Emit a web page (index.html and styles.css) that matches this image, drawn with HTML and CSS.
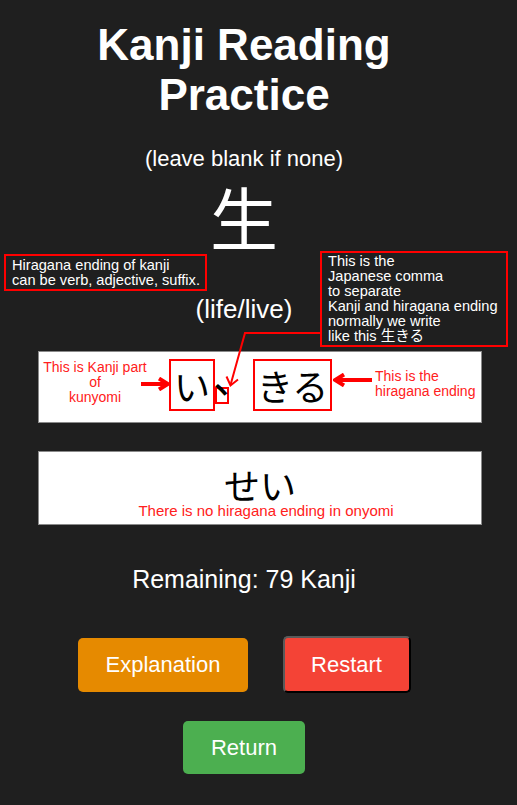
FILE: index.html
```html
<!DOCTYPE html>
<html lang="en">
<head>
<meta charset="utf-8">
<title>Kanji Reading Practice</title>
<link rel="stylesheet" href="styles.css">
</head>
<body>
<div class="app">
  <h1 class="title">Kanji Reading Practice</h1>
  <p class="hint">(leave blank if none)</p>
  <div class="kanji">生</div>
  <p class="meaning">(life/live)</p>

  <div class="answer kun">
    <span class="mark">い</span><span class="comma"><span class="comma-glyph">、</span></span><span class="mark wide">きる</span>
    <span class="label label-left">This is Kanji part<br>of<br>kunyomi</span>
    <svg class="arrow arrow-left" width="30" height="14" viewBox="0 0 30 14"><path d="M1 7H27M19 1.5L28 7L19 12.5" fill="none" stroke="#ff0000" stroke-width="4"/></svg>
    <svg class="arrow arrow-right" width="40" height="14" viewBox="0 0 40 14"><path d="M39 7H3M11 1.5L2 7L11 12.5" fill="none" stroke="#ff0000" stroke-width="4"/></svg>
    <span class="label label-right">This is the<br>hiragana ending</span>
  </div>

  <div class="answer on">
    <div class="on-kana">せい</div>
    <div class="on-note">There is no hiragana ending in onyomi</div>
  </div>

  <p class="remaining">Remaining: 79 Kanji</p>

  <div class="actions">
    <button class="btn btn-explain">Explanation</button>
    <button class="btn btn-restart">Restart</button>
  </div>
  <div class="actions">
    <button class="btn btn-return">Return</button>
  </div>

  <div class="note note-ending">Hiragana ending of kanji<br>can be verb, adjective, suffix.</div>
  <div class="note note-comma">This is the<br>Japanese comma<br>to separate<br>Kanji and hiragana ending<br>normally we write<br>like this 生きる</div>
  <svg class="connector" width="110" height="70" viewBox="220 325 110 70"><path d="M321 333H245L230.5 385" fill="none" stroke="#ff0000" stroke-width="2"/><path d="M226.5 376.5L230.5 385.5L238 379.5" fill="none" stroke="#ff0000" stroke-width="2"/></svg>
</div>
</body>
</html>
```

FILE: styles.css
```css
html, body {
  margin: 0;
  padding: 0;
  background: #1f1f1f;
}
body {
  font-family: "Liberation Sans", Arial, "Noto Sans CJK JP", sans-serif;
  color: #ffffff;
}
.app {
  position: relative;
  width: 488px;
  padding-top: 20px;
  text-align: center;
}
.title {
  width: 320px;
  margin: 0 auto;
  font-size: 44px;
  font-weight: bold;
  line-height: 50px;
}
.hint {
  margin: 26px 0 0;
  font-size: 22px;
  line-height: 25px;
}
.kanji {
  margin-top: 11px;
  font-family: "Noto Sans CJK JP", sans-serif;
  font-size: 68px;
  line-height: 68px;
}
.meaning {
  margin: 44px 0 0;
  font-size: 26px;
  line-height: 30px;
}
.answer {
  position: relative;
  box-sizing: border-box;
  width: 444px;
  margin-left: 38px;
  background: #ffffff;
  border: 1px solid #8a8a8a;
  color: #000000;
}
.kun {
  display: flex;
  align-items: flex-start;
  margin-top: 27px;
  height: 72px;
  padding: 7px 0 0 130px;
}
.mark {
  box-sizing: border-box;
  height: 52px;
  padding: 0 3px;
  border: 2px solid #ff0000;
  font-family: "Noto Sans CJK JP", sans-serif;
  font-size: 36px;
  line-height: 48px;
}
.mark.wide {
  margin-left: 24px;
  padding: 0 2px;
}
.comma {
  box-sizing: border-box;
  width: 14px;
  height: 17px;
  margin-top: 28px;
  border: 2px solid #ff0000;
}
.comma-glyph {
  display: block;
  margin: -32px 0 0 -4px;
  font-family: "Noto Sans CJK JP", sans-serif;
  font-size: 42px;
  line-height: 36px;
  white-space: nowrap;
}
.label {
  position: absolute;
  font-size: 14px;
  line-height: 15px;
  color: #ff2020;
}
.label-left {
  left: 1px;
  top: 8px;
  width: 110px;
  text-align: center;
}
.label-right {
  left: 336px;
  top: 17px;
  text-align: left;
}
.arrow {
  position: absolute;
}
.arrow-left {
  left: 101px;
  top: 25px;
}
.arrow-right {
  left: 294px;
  top: 21px;
}
.on {
  margin-top: 28px;
  height: 74px;
  padding-top: 14px;
}
.on-kana {
  font-family: "Noto Sans CJK JP", sans-serif;
  font-size: 36px;
  line-height: 36px;
}
.on-note {
  margin-top: 0;
  padding-left: 12px;
  font-size: 15px;
  line-height: 17px;
  color: #ff2020;
}
.remaining {
  margin: 40px 0 0;
  font-size: 25px;
  line-height: 29px;
}
.actions {
  display: flex;
  justify-content: center;
  gap: 35px;
  margin-top: 44px;
}
.actions + .actions {
  margin-top: 28px;
}
.btn {
  box-sizing: border-box;
  height: 54px;
  padding: 0 28px;
  border: none;
  border-radius: 5px;
  font-family: "Liberation Sans", Arial, sans-serif;
  font-size: 22px;
  line-height: 54px;
  color: #ffffff;
}
.btn-explain {
  width: 170px;
  background: #e68a00;
}
.btn-restart {
  width: 128px;
  height: 57px;
  margin-top: -2px;
  padding: 0;
  border: 2px solid;
  border-color: #5a5a5a #000000 #000000 #5a5a5a;
  background: #f44336;
  line-height: 53px;
}
.btn-return {
  width: 122px;
  height: 53px;
  padding: 0;
  line-height: 53px;
  background: #4caf50;
}
.note {
  position: absolute;
  box-sizing: border-box;
  border: 2px solid #ff0000;
  font-size: 14.6px;
  line-height: 15px;
  color: #ffffff;
  text-align: left;
  white-space: nowrap;
}
.note-ending {
  left: 4px;
  top: 254px;
  width: 203px;
  height: 37px;
  padding: 2px 0 0 6px;
}
.note-comma {
  left: 320px;
  top: 251px;
  width: 188px;
  height: 96px;
  padding: 1px 0 0 6px;
  background: #1f1f1f;
}
.connector {
  position: absolute;
  left: 220px;
  top: 325px;
}
```
